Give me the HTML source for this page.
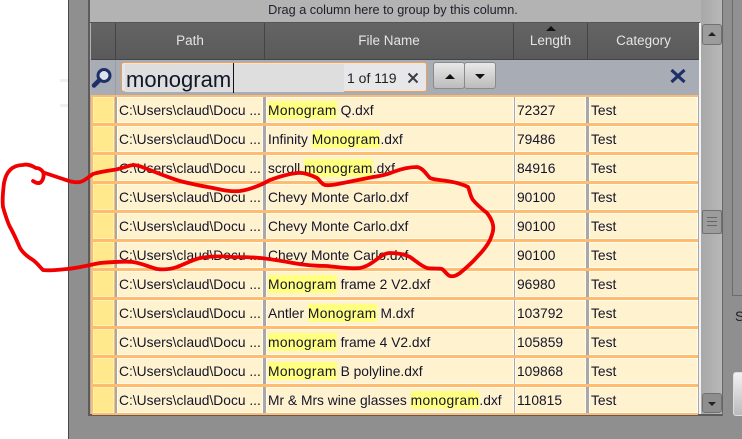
<!DOCTYPE html>
<html><head><meta charset="utf-8">
<style>
html,body{margin:0;padding:0}
body{width:742px;height:439px;overflow:hidden;position:relative;background:#fff;font-family:"Liberation Sans",sans-serif;font-size:13.8px;color:#14142a}
div{position:absolute;box-sizing:border-box}
.row{left:92px;width:606px;height:29px;background:#ffbc6e}
.c{top:1px;height:26px;background:#fff3cf;border:1px solid #fffbf0;white-space:nowrap;overflow:hidden;line-height:25px;padding-left:1px}
.s{left:1px;width:21px;background:#ffe98c;border-color:#fff2b0}
.p{left:25px;width:146px}
.n{left:174px;width:248px}
.l{left:423px;width:71px}
.t{left:497px;width:109px}
.g{top:1px;height:26px;background:#a8a8a8}
b{font-weight:normal;background:#ffff80;padding:2px 0 1px;letter-spacing:.35px}
.h{top:23px;height:37px;color:#e4e4e4;text-align:center;line-height:36px;font-size:13.5px;border-right:1px solid #444}
</style></head><body>
<div style="left:60px;top:79px;width:8px;height:3px;background:#f0f0f4"></div>
<div style="left:60px;top:104px;width:8px;height:3px;background:#f0f0f4"></div>
<div style="left:68px;top:0;width:674px;height:439px;background:#8f8f8f;border-left:1px solid #4a4a4a"></div>
<div style="left:88px;top:0;width:636px;height:416px;background:#b2b2b2;border:2px solid #5c5c5c;border-top:0"></div>
<div style="left:722px;top:0;width:11px;height:416px;background:#8f8f8f;border-left:1px solid #666"></div>
<div style="left:732px;top:0;width:10px;height:296px;border-left:1px solid #6c6c6c;border-bottom:1px solid #6c6c6c;background:#919191"></div>
<div style="left:735px;top:309px;line-height:16px;color:#222">S</div>
<div style="left:733px;top:372px;width:12px;height:44px;border-radius:3px;background:linear-gradient(#f2f2f2,#bbb);border:1px solid #ddd"></div>

<div style="left:90px;top:0;width:610px;height:23px;background:#b3b3b3;text-align:center;line-height:20px;font-size:12.7px;color:#20202c;padding-right:4px;border-bottom:1px solid #555">Drag a column here to group by this column.</div>

<div style="left:91px;top:23px;width:608px;height:37px;background:linear-gradient(#646464,#5a5a5a);border-bottom:1px solid #444"></div>
<div class="h" style="left:91px;width:25px"></div>
<div class="h" style="left:116px;width:149px">Path</div>
<div class="h" style="left:265px;width:249px">File Name</div>
<div class="h" style="left:514px;width:74px">Length</div>
<div class="h" style="left:588px;width:111px;border:0">Category</div>
<div style="left:546px;top:26px;width:0;height:0;border-left:5px solid transparent;border-right:5px solid transparent;border-bottom:5px solid #111"></div>

<div style="left:91px;top:60px;width:608px;height:36px;background:#a8acb5"></div>
<div style="left:115px;top:60px;width:1px;height:36px;background:#9a9da6"></div>
<svg style="position:absolute;left:91px;top:66px" width="24" height="24" viewBox="0 0 24 24"><circle cx="13" cy="9.500" r="6" fill="#dfe3ee" stroke="#1f2f68" stroke-width="3"/><path d="M8.500 14L3 19.500" stroke="#1f2f68" stroke-width="4.500" stroke-linecap="round"/></svg>
<div style="left:121px;top:62px;width:306px;height:30px;background:#e7e7e9;border:1px solid #eda050;border-radius:3px"></div>
<div style="left:125px;top:64px;width:219px;height:28px;background:#dedede"></div>
<div style="left:126px;top:65px;height:28px;line-height:30px;font-size:22px;color:#101828">monogram</div>
<div style="left:233px;top:63px;width:1px;height:30px;background:#111"></div>
<div style="left:347px;top:69px;line-height:18px;font-size:14px;color:#222">1 of 119</div>
<svg style="position:absolute;left:407px;top:72px" width="12" height="12"><path d="M1.500 1.500L10.500 10.500M10.500 1.500L1.500 10.500" stroke="#3c3c44" stroke-width="2"/></svg>
<div style="left:433px;top:62px;width:32px;height:27px;background:linear-gradient(#e8e8e8,#bcbcbc);border:1px solid #8a8a8a;border-radius:3px"></div>
<div style="left:464px;top:62px;width:32px;height:27px;background:linear-gradient(#e8e8e8,#bcbcbc);border:1px solid #8a8a8a;border-radius:3px"></div>
<div style="left:445px;top:74px;width:0;height:0;border-left:5px solid transparent;border-right:5px solid transparent;border-bottom:5px solid #111"></div>
<div style="left:475px;top:74px;width:0;height:0;border-left:5px solid transparent;border-right:5px solid transparent;border-top:5px solid #111"></div>
<svg style="position:absolute;left:669px;top:68px" width="18" height="16"><path d="M2.500 2L15.500 14M15.500 2L2.500 14" stroke="#1f2f68" stroke-width="3.200"/></svg>

<div style="left:91px;top:95px;width:607px;height:319px;background:#ffbc6e"></div>
<div style="left:698px;top:96px;width:1px;height:318px;background:#a8a8a8"></div>
<div class="row" style="top:96px"><div class="c s"></div><div class="g" style="left:23px;width:2px"></div><div class="c p">C:\Users\claud\Docu ...</div><div class="g" style="left:171px;width:3px"></div><div class="c n"><b>Monogram</b> Q.dxf</div><div class="g" style="left:422px;width:1px"></div><div class="c l">72327</div><div class="g" style="left:494px;width:3px"></div><div class="c t">Test</div></div>
<div class="row" style="top:125px"><div class="c s"></div><div class="g" style="left:23px;width:2px"></div><div class="c p">C:\Users\claud\Docu ...</div><div class="g" style="left:171px;width:3px"></div><div class="c n">Infinity <b>Monogram</b>.dxf</div><div class="g" style="left:422px;width:1px"></div><div class="c l">79486</div><div class="g" style="left:494px;width:3px"></div><div class="c t">Test</div></div>
<div class="row" style="top:154px"><div class="c s"></div><div class="g" style="left:23px;width:2px"></div><div class="c p">C:\Users\claud\Docu ...</div><div class="g" style="left:171px;width:3px"></div><div class="c n">scroll <b>monogram</b>.dxf</div><div class="g" style="left:422px;width:1px"></div><div class="c l">84916</div><div class="g" style="left:494px;width:3px"></div><div class="c t">Test</div></div>
<div class="row" style="top:183px"><div class="c s"></div><div class="g" style="left:23px;width:2px"></div><div class="c p">C:\Users\claud\Docu ...</div><div class="g" style="left:171px;width:3px"></div><div class="c n">Chevy Monte Carlo.dxf</div><div class="g" style="left:422px;width:1px"></div><div class="c l">90100</div><div class="g" style="left:494px;width:3px"></div><div class="c t">Test</div></div>
<div class="row" style="top:212px"><div class="c s"></div><div class="g" style="left:23px;width:2px"></div><div class="c p">C:\Users\claud\Docu ...</div><div class="g" style="left:171px;width:3px"></div><div class="c n">Chevy Monte Carlo.dxf</div><div class="g" style="left:422px;width:1px"></div><div class="c l">90100</div><div class="g" style="left:494px;width:3px"></div><div class="c t">Test</div></div>
<div class="row" style="top:241px"><div class="c s"></div><div class="g" style="left:23px;width:2px"></div><div class="c p">C:\Users\claud\Docu ...</div><div class="g" style="left:171px;width:3px"></div><div class="c n">Chevy Monte Carlo.dxf</div><div class="g" style="left:422px;width:1px"></div><div class="c l">90100</div><div class="g" style="left:494px;width:3px"></div><div class="c t">Test</div></div>
<div class="row" style="top:270px"><div class="c s"></div><div class="g" style="left:23px;width:2px"></div><div class="c p">C:\Users\claud\Docu ...</div><div class="g" style="left:171px;width:3px"></div><div class="c n"><b>Monogram</b> frame 2 V2.dxf</div><div class="g" style="left:422px;width:1px"></div><div class="c l">96980</div><div class="g" style="left:494px;width:3px"></div><div class="c t">Test</div></div>
<div class="row" style="top:299px"><div class="c s"></div><div class="g" style="left:23px;width:2px"></div><div class="c p">C:\Users\claud\Docu ...</div><div class="g" style="left:171px;width:3px"></div><div class="c n">Antler <b>Monogram</b> M.dxf</div><div class="g" style="left:422px;width:1px"></div><div class="c l">103792</div><div class="g" style="left:494px;width:3px"></div><div class="c t">Test</div></div>
<div class="row" style="top:328px"><div class="c s"></div><div class="g" style="left:23px;width:2px"></div><div class="c p">C:\Users\claud\Docu ...</div><div class="g" style="left:171px;width:3px"></div><div class="c n"><b>monogram</b> frame 4 V2.dxf</div><div class="g" style="left:422px;width:1px"></div><div class="c l">105859</div><div class="g" style="left:494px;width:3px"></div><div class="c t">Test</div></div>
<div class="row" style="top:357px"><div class="c s"></div><div class="g" style="left:23px;width:2px"></div><div class="c p">C:\Users\claud\Docu ...</div><div class="g" style="left:171px;width:3px"></div><div class="c n"><b>Monogram</b> B polyline.dxf</div><div class="g" style="left:422px;width:1px"></div><div class="c l">109868</div><div class="g" style="left:494px;width:3px"></div><div class="c t">Test</div></div>
<div class="row" style="top:386px"><div class="c s"></div><div class="g" style="left:23px;width:2px"></div><div class="c p">C:\Users\claud\Docu ...</div><div class="g" style="left:171px;width:3px"></div><div class="c n">Mr &amp; Mrs wine glasses <b>monogram</b>.dxf</div><div class="g" style="left:422px;width:1px"></div><div class="c l">110815</div><div class="g" style="left:494px;width:3px"></div><div class="c t">Test</div></div>

<div style="left:699px;top:23px;width:2px;height:391px;background:#f2f2f2"></div>
<div style="left:701px;top:0;width:21px;height:414px;background:linear-gradient(90deg,#a8a8a8,#b8b8b8)"></div>
<div style="left:702px;top:24px;width:20px;height:21px;background:#9c9c9c;border:1px solid #707070;border-radius:3px"></div>
<div style="left:708px;top:32px;width:0;height:0;border-left:4px solid transparent;border-right:4px solid transparent;border-bottom:4px solid #222"></div>
<div style="left:702px;top:210px;width:20px;height:24px;background:#9c9c9c;border:1px solid #707070;border-radius:2px"></div>
<div style="left:707px;top:217px;width:10px;height:9px;border-top:1px solid #666;border-bottom:1px solid #666"></div>
<div style="left:707px;top:221px;width:10px;height:1px;background:#666"></div>
<div style="left:702px;top:393px;width:20px;height:20px;background:#8e8e8e;border:1px solid #707070;border-radius:3px"></div>
<div style="left:708px;top:402px;width:0;height:0;border-left:4px solid transparent;border-right:4px solid transparent;border-top:4px solid #222"></div>

<svg style="position:absolute;left:0;top:0" width="742" height="439" viewBox="0 0 742 439"><path d="M33 181C36 183 39 184 41 182C44 179 44 174 43 172C41 169 38 168 36 168C31 165 26 164 23 165C17 165 13 167 10 170C6 174 5 179 4 183C3 191 2 199 3 207C5 214 7 221 10 227C14 234 17 241 20 248C23 253 28 257 33 260C37 263 40 267 43 270C50 271 58 270 67 269C78 268 89 265 100 263C111 262 122 261 133 262C141 263 149 267 157 269C164 270 171 269 177 267C185 264 192 260 200 258C211 256 222 256 233 257C242 257 251 257 260 258C271 259 282 261 293 263C304 265 316 266 327 266C338 267 349 269 360 268C365 267 369 265 373 262C379 258 384 253 390 253C397 253 404 254 410 257C416 261 421 266 427 268C432 269 437 268 442 269C445 271 447 275 450 276C454 277 457 275 460 273C466 268 472 263 477 257C482 252 487 246 490 240C492 235 494 230 493 225C492 220 490 217 487 213C482 209 477 205 473 200C470 196 470 191 468 187C462 184 454 182 447 181C441 180 435 180 430 178C426 174 423 168 417 167C409 167 401 169 393 172C386 175 380 176 373 177C363 179 353 181 343 183C337 184 331 186 325 185C321 184 320 180 317 178C311 175 304 172 297 173C288 174 278 177 270 180C266 182 263 184 260 185C253 188 247 190 240 191C231 192 222 190 213 188C202 186 191 184 180 181C170 178 160 174 150 170C144 168 139 165 133 165C127 166 120 169 113 170C106 171 99 172 93 174C88 177 85 181 80 182C74 183 69 181 63 179C57 177 51 175 45 173" fill="none" stroke="#f00000" stroke-width="3.800" stroke-linecap="round" stroke-linejoin="round"/></svg>
</body></html>
